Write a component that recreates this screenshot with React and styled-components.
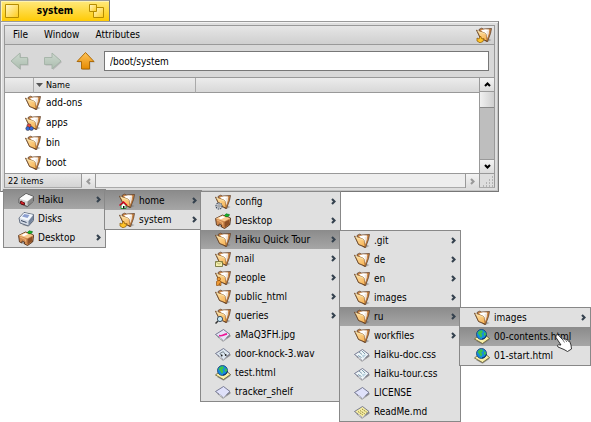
import React from "react";
import styled, { createGlobalStyle, css } from "styled-components";

const Global = createGlobalStyle`
  * { box-sizing: border-box; }
  body { margin: 0; background: #fff; }
  body, button, input { font: 10px/16px "DejaVu Sans Condensed", "DejaVu Sans", sans-serif; color: #000; }
  button, input { margin: 0; padding: 0; border: 0; border-radius: 0; background: none; }
  ul { list-style: none; margin: 0; padding: 0; }
`;

const Svg = styled.svg`
  flex: none;
  display: block;
`;

const Desktop = styled.main`
  min-height: 100vh;
`;

const Window = styled.article`
  position: relative;
  width: calc(100% - 92px);
  min-width: 300px;
`;

const Tab = styled.header`
  display: grid;
  grid-template-columns: 16px 1fr 16px;
  align-items: center;
  width: 110px;
  height: 21px;
  padding: 0 4px;
  border: 1px solid #999;
  border-bottom: 0;
  border-right-color: #777;
  background: linear-gradient(#ffe97c, #ffcb05);
  box-shadow: inset 1px 1px #fff3b0;
`;

const TabButton = styled.button`
  display: block;
  height: 16px;
`;

const TabTitle = styled.h1`
  margin: 0;
  text-align: center;
  font-size: 10px;
  line-height: 16px;
  font-weight: bold;
`;

const Frame = styled.section`
  padding: 4px 3px 3px 4px;
  border: 1px solid #999;
  border-right-color: #777;
  border-bottom-color: #777;
  background: #dedede;
  box-shadow: inset 1px 1px #f2f2f2, inset -1px -1px #c4c4c4;
`;

const Content = styled.div`
  border: 1px solid #999;
  border-bottom-color: #aaa;
  margin: -1px 0 0 -1px;
  background: #d8d8d8;
`;

const MenuBar = styled.nav`
  display: flex;
  align-items: center;
  gap: 16px;
  height: 19px;
  padding: 0 2px 0 8px;
  border-bottom: 1px solid #999;
  background: linear-gradient(#e6e6e6, #cfcfcf);
`;

const BarFill = styled.span`
  flex: 1;
`;

const ToolBar = styled.div`
  display: flex;
  align-items: center;
  height: 33px;
  padding: 0 5px;
  gap: 13px;
  border-bottom: 1px solid #999;
`;

const ToolButton = styled.button`
  display: block;
  height: 20px;
`;

const Address = styled.input`
  flex: 1;
  min-width: 0;
  height: 20px;
  margin-left: -5px;
  && { padding: 0 5px; background: #fff; border: 1px solid #777; }
`;

const Body = styled.div`
  display: grid;
  grid-template-columns: 1fr 15px;
`;

const Table = styled.table`
  width: 100%;
  table-layout: fixed;
  border-collapse: separate;
  border-spacing: 0;
  background: #fff;
`;

const HeadCell = styled.th`
  width: ${(p) => p.$width || "auto"};
  height: 15px;
  padding: 0 0 0 2px;
  text-align: left;
  font-size: 9px;
  line-height: 14px;
  font-weight: normal;
  border-bottom: 1px solid #999;
  border-right: ${(p) => (p.$line ? "1px solid #aaa" : "0")};
  background: linear-gradient(#ececec, #d8d8d8);
`;

const SortLabel = styled.span`
  display: flex;
  align-items: center;
  gap: 3px;
`;

const Cell = styled.td`
  height: 20px;
  padding: 0;
`;

const FileName = styled.span`
  display: flex;
  align-items: center;
  gap: 5px;
  margin-left: -9px;
`;

const VScroll = styled.div`
  display: flex;
  flex-direction: column;
  border-left: 1px solid #999;
  background: #bebebe;
`;

const ScrollButton = styled.button`
  display: flex;
  align-items: center;
  justify-content: center;
  width: 14px;
  height: 14px;
  && {
    background: linear-gradient(#f4f4f4, #dcdcdc);
    ${(p) => css`border-${p.$line}: 1px solid #999;`}
  }
`;

const Thumb = styled.div`
  height: 16px;
  background: linear-gradient(90deg, #f0f0f0, #cfcfcf);
  border-bottom: 1px solid #888;
`;

const Track = styled.div`
  flex: 1;
`;

const Footer = styled.footer`
  display: flex;
  height: 14px;
  border-top: 1px solid #999;
  background: #eee;
`;

const Status = styled.output`
  width: 77px;
  padding-left: 3px;
  font-size: 9px;
  line-height: 14px;
  background: linear-gradient(#e8e8e8, #d4d4d4);
  border-right: 1px solid #999;
`;

const Corner = styled.div`
  display: flex;
  border-left: 1px solid #999;
  background: #dedede;
`;

const Menu = styled.ul`
  position: absolute;
  z-index: 1;
  left: ${(p) => (p.$root ? "3px" : "calc(100% - 1px)")};
  top: ${(p) => (p.$root ? "calc(100% - 3px)" : "0")};
  width: ${(p) => p.$width};
  border: 1px solid #888;
  background: #e0e0e0;
`;

const MenuRow = styled.li`
  position: relative;
`;

const MenuButton = styled.button`
  display: flex;
  align-items: center;
  gap: 4px;
  width: 100%;
  height: 19px;
  && {
    padding: 0 3px 0 14px;
    background: ${(p) => (p.$active ? "linear-gradient(#8b8b8b, #a6a6a6)" : "none")};
  }
`;

const MenuText = styled.span`
  flex: 1;
  text-align: left;
  white-space: nowrap;
`;

const Pointer = styled.span`
  position: absolute;
  z-index: 2;
  right: 17px;
  top: 7px;
`;

const overlays = {
  apps: (
    <g stroke="#333" strokeWidth=".5">
      <circle cx="4" cy="11" r="2.2" fill="#ee4a3c" />
      <circle cx="2.8" cy="13.6" r="2" fill="#3568dd" />
      <circle cx="6.4" cy="13.5" r="2" fill="#3568dd" />
    </g>
  ),
  home: (
    <g>
      <path d="M2 12v3.5h5V12L4.5 10z" fill="#fff" stroke="#2b8d38" />
      <path d="M.5 12.5 4.5 9l3.5 3.5" fill="none" stroke="#d1001f" strokeWidth="1.5" />
      <path d="M4 13h1.5v2.5H4z" fill="#111" />
    </g>
  ),
  system: <path d="M1 11l2 1 1.5-3L6 12l2-.5-1 3-3 1.3L1 14z" fill="#ffc329" stroke="#8d5900" strokeWidth=".7" />,
  config: (
    <g>
      <circle cx="4" cy="12" r="3" fill="#d7dce4" stroke="#444e5c" strokeWidth="1.2" strokeDasharray="1.5 .7" />
      <circle cx="4" cy="12" r="1.2" fill="#fff" stroke="#555" strokeWidth=".7" />
    </g>
  ),
  mail: (
    <g stroke="#68682b" strokeWidth=".8">
      <path d="M.5 10.5h7v5h-7z" fill="#f4efad" />
      <path d="m1 11 3 2.2L7.2 11" fill="none" strokeWidth=".4" />
    </g>
  ),
  people: (
    <g fill="#ee9a35" stroke="#804000" strokeWidth=".6">
      <path d="M1.5 15.5v-4l1.500-1h1.500l1.500 1v4H4.500v-2l-1 2z" />
      <circle cx="3.800" cy="9" r="1.700" />
    </g>
  ),
  queries: (
    <g>
      <path d="m3 13-2.500 2.500" stroke="#333" strokeWidth="1.5" />
      <circle cx="5" cy="11" r="2.6" fill="#c5e8f7" stroke="#3f5363" />
    </g>
  ),
};

const Folder = ({ badge }) => (
  <>
    <path d="m12 11.500 3.500 1.500-4 2-2-1z" fill="#666" opacity=".45" />
    <path d="M3 2.500 5.500 1.200l2 .8 8-.5-1 5-3 8-2-.5z" fill="#c98445" stroke="#54351f" strokeWidth=".7" />
    <path d="M5 3.300 9 2.200l4 .2-.8 5-1.200 4-2-4z" fill="#fff" />
    <path d="m10.500 4.300 2.800-1.200-1 5-1 3z" fill="#efe6dc" />
    <path d="M.5 3 3 4.200l5.500 1.600 1.700 1.400 1 7-6.700-2.700z" fill="url(#flap)" stroke="#8a5a2c" strokeWidth=".6" />
    <path d="M.5 3l4 8.500 6.700 2.700" fill="none" stroke="#54351f" strokeWidth=".7" />
    <path d="m1.300 3.900 1.700.9 5.200 1.600 1.300 1" fill="none" stroke="#fff0bd" strokeWidth=".7" />
    {overlays[badge]}
  </>
);

const Sheet = ({ fill, children }) => (
  <>
    <path d="m2 9.500 6 5.300 7.500-5.300V8z" fill="#666" opacity=".65" />
    <path d="M.5 7.500 8.500 2.500l6.500 5-6.500 6z" fill={fill} stroke="#5c607c" strokeWidth=".8" />
    <path d="m4 10.500 4.500 3 3-2.500" fill="none" stroke="#fff" strokeWidth=".6" />
    {children}
  </>
);

const art = {
  file: <Sheet fill="#dfe1fa" />,
  css: (
    <Sheet fill="#eef5f8">
      <path d="m5 5 3 2.500M8 4l3 3M4 8.500l3.500 2" stroke="#7e9eae" strokeWidth="1" />
      <path d="m8 8 4.500-.5L9 11z" fill="#b8d2df" />
    </Sheet>
  ),
  text: (
    <Sheet fill="#f5eda5">
      <path d="m4 7.500 5 3.500M6 6.500l5 3.500M8 5l5 3.500" stroke="#8c7f35" strokeWidth=".9" strokeDasharray="1.500 .7" />
    </Sheet>
  ),
  image: (
    <Sheet fill="#e7e4f7">
      <path d="M4 8.700q3 .3 4.500-.6t3.500-1.300" fill="none" stroke="#ee1694" strokeWidth="1.7" />
    </Sheet>
  ),
  sound: (
    <Sheet fill="#dde7f0">
      <path d="M4.800 7.500 8.500 5.500M6.500 9.500l-1.500-2M11 9.500 8.500 6" fill="none" stroke="#4a5862" strokeWidth=".7" />
      <circle cx="6.7" cy="9.500" r=".9" fill="#222" />
      <circle cx="10.7" cy="9" r=".9" fill="#222" />
    </Sheet>
  ),
  html: (
    <>
      <path d="m2 12 6.500 3.700L15.500 11V9z" fill="#777" opacity=".7" />
      <path d="m.5 10 3-2.500 9-.5 3 2.500-7 5z" fill="#f8efa9" stroke="#62592b" strokeWidth=".8" />
      <circle cx="7.5" cy="5.5" r="5" fill="#168be3" stroke="#123d68" strokeWidth=".8" />
      <path d="M3.500 4Q5 .8 8 1.300L9 3 7 5l1.500 1L7 9 5.500 6.500zM10 3l2 1.500-.5 3L9.800 6z" fill="#3cc34a" />
      <path d="M8 10q4-.5 4.500-4" stroke="#10346d" fill="none" />
    </>
  ),
  drive: (
    <>
      <path d="m3 12 6 3.500 6.500-6V8z" fill="#666" opacity=".6" />
      <path d="m1 6.500 7-5 7.500 3v4.500L9.500 14.500 1 11z" fill="#d2d2d2" stroke="#444" strokeWidth=".8" />
      <path d="m1.500 6.500 6.700-4.500 6.800 2.700L9.500 9.500z" fill="#fafafa" />
      <path d="m9.500 9.500 5.700-4.600v4L9.500 14z" fill="#888" />
      <path d="M2.500 9.300h1.500l1 1.200 1.500.3v2l-2.500-.3-1.500-1.200z" fill="#dc1d28" stroke="#4d0000" strokeWidth=".8" />
    </>
  ),
  disks: (
    <>
      <path d="m4 14 6 1.500 5.500-5V8z" fill="#666" opacity=".5" />
      <path d="m1 7 5-5.500 9.500 2V9l-5 6-8.500-3z" fill="#d3dae5" stroke="#48566c" strokeWidth=".8" />
      <path d="m1.500 7 4.700-5 8.500 1.800-4.200 6z" fill="#f3f7fc" />
      <path d="M4 5.500 6.500 3l5 1L9.500 7z" fill="#8c9fd0" />
      <path d="m10.500 10 4.500-5.500V9l-4.500 5.500z" fill="#75849c" />
      <path d="m3 9.500 5.500 2" stroke="#35435d" />
    </>
  ),
  desktop: (
    <>
      <path d="m3 13 7 2.500 5.500-4v-3z" fill="#666" opacity=".6" />
      <path d="m.5 5.500 7-3.500 8 3v2l-1 5-5 3.500-3-1.500V12L4 11v2l-2.500-1z" fill="#cf8a50" stroke="#4c2c18" strokeWidth=".8" />
      <path d="m.8 5.500 6.700-3 7.700 2.800-5.700 3z" fill="#f9ca90" />
      <path d="m9.500 9 5-2.500-.5 5-4.500 3z" fill="#8e5027" />
      <path d="m3.500 5 4-2 2.500 1.300-4 2z" fill="#fff" />
      <path d="m9.500 2.500 1.500-1.700 3.500.8-.8 1.700-2.700.5z" fill="#18b82b" stroke="#076714" strokeWidth=".6" />
      <path d="m2 7 5.500 2.500v2" fill="none" stroke="#efb476" />
    </>
  ),
};

const Icon = ({ kind, badge, size = 16 }) => (
  <Svg width={size} height={size} viewBox="0 0 16 16" aria-hidden="true">
    {kind === "folder" ? <Folder badge={badge} /> : art[kind]}
  </Svg>
);

const turns = { right: 0, down: 90, left: 180, up: 270 };

const Chevron = ({ dir = "right", color = "#34414e" }) => (
  <Svg width="7" height="7" viewBox="0 0 7 7" aria-hidden="true">
    <path d="M2 1l2.500 2.500L2 6" fill="none" stroke={color} strokeWidth="2.1" transform={`rotate(${turns[dir]} 3.5 3.5)`} />
  </Svg>
);

const arrowPaths = {
  back: "M1 10 10 2v4.500h7.500v7H10V18z",
  forward: "M18 10 9 2v4.500H1.500v7H9V18z",
  up: "M9.500 1.500 18 10.500h-4.500V18h-8v-7.500H1z",
};

const NavArrow = ({ kind }) => (
  <Svg width="20" height="20" viewBox="0 0 20 20" aria-hidden="true">
    <path d={arrowPaths[kind]} transform="translate(1 1)" fill="#777" opacity=".35" />
    <path d={arrowPaths[kind]} fill={kind === "up" ? "url(#orange)" : "url(#sage)"} stroke={kind === "up" ? "#a86400" : "#a3b2a6"} strokeWidth=".9" />
  </Svg>
);

const Hand = () => (
  <Svg width="18" height="18" viewBox="0 0 18 18" aria-hidden="true">
    <path d="M1 1.500Q2-.2 3.500 1.200L7.500 5.500Q8.200 4.200 9.800 5.300 11 4.500 12 5.800 13.500 5.300 14.500 7L16 11l.5 4-4 2.500L9 15.500 3 13Q1.500 11 3.500 10.800L6 11 1 3.500z" fill="#fff" stroke="#222" strokeWidth=".9" />
    <path d="m8 6 1.500 2.500M10.300 5.500l1.500 2.500M12.500 6l1.300 2" stroke="#444" strokeWidth=".7" />
  </Svg>
);

const folder = (name, badge, rest) => ({ name, badge, kind: "folder", sub: true, ...rest });
const file = (name, kind, rest) => ({ name, kind, ...rest });

const tourRu = {
  width: "132px",
  items: [folder("images"), file("00-contents.html", "html", { active: true, pointer: true }), file("01-start.html", "html")],
};

const tour = {
  width: "122px",
  items: [
    folder(".git"), folder("de"), folder("en"), folder("images"),
    folder("ru", null, { active: true, menu: tourRu }),
    folder("workfiles"),
    file("Haiku-doc.css", "css"), file("Haiku-tour.css", "css"), file("LICENSE", "file"), file("ReadMe.md", "text"),
  ],
};

const home = {
  width: "141px",
  items: [
    folder("config", "config"),
    file("Desktop", "desktop", { sub: true }),
    folder("Haiku Quick Tour", null, { active: true, menu: tour }),
    folder("mail", "mail"), folder("people", "people"), folder("public_html"), folder("queries", "queries"),
    file("aMaQ3FH.jpg", "image"), file("door-knock-3.wav", "sound"), file("test.html", "html"), file("tracker_shelf", "file"),
  ],
};

const haiku = {
  width: "98px",
  items: [folder("home", "home", { active: true, menu: home }), folder("system", "system")],
};

const rootMenu = {
  width: "103px",
  items: [
    file("Haiku", "drive", { sub: true, active: true, menu: haiku }),
    file("Disks", "disks"),
    file("Desktop", "desktop", { sub: true }),
  ],
};

const PopupMenu = ({ menu, root }) => (
  <Menu role="menu" $root={root} $width={menu.width}>
    {menu.items.map((item) => (
      <MenuRow key={item.name} role="none">
        <MenuButton role="menuitem" $active={item.active} aria-haspopup={item.sub ? "menu" : undefined}>
          <Icon kind={item.kind} badge={item.badge} />
          <MenuText>{item.name}</MenuText>
          {item.sub && <Chevron />}
        </MenuButton>
        {item.menu && <PopupMenu menu={item.menu} />}
        {item.pointer && <Pointer><Hand /></Pointer>}
      </MenuRow>
    ))}
  </Menu>
);

const files = [["add-ons"], ["apps", "apps"], ["bin"], ["boot"]];

export default function App() {
  return (
    <Desktop>
      <Global />
      <Window>
        <Tab>
          <TabButton aria-label="Close">
            <Svg width="14" height="16" viewBox="0 0 14 16">
              <defs>
                <linearGradient id="gold" x2="1" y2="1"><stop stopColor="#fff8cf" /><stop offset="1" stopColor="#ffcb15" /></linearGradient>
                <linearGradient id="flap" x2="1" y2="1"><stop stopColor="#ffe6ae" /><stop offset="1" stopColor="#f6ae4c" /></linearGradient>
                <linearGradient id="orange" x2="0" y2="1"><stop stopColor="#ffc45a" /><stop offset="1" stopColor="#e58a00" /></linearGradient>
                <linearGradient id="sage" x2="0" y2="1"><stop stopColor="#ccd8ce" /><stop offset="1" stopColor="#acbdaf" /></linearGradient>
              </defs>
              <path d="M.5 1.500h13v13H.5z" fill="url(#gold)" stroke="#b68c00" />
            </Svg>
          </TabButton>
          <TabTitle>system</TabTitle>
          <TabButton aria-label="Zoom">
            <Svg width="15" height="16" viewBox="0 0 15 16">
              <path d="M4.500 4.500h10v10h-10z" fill="url(#gold)" stroke="#b68c00" />
              <path d="M.5 1.500h7v7h-7z" fill="url(#gold)" stroke="#b68c00" />
            </Svg>
          </TabButton>
        </Tab>
        <Frame>
          <Content>
            <MenuBar>
              <button>File</button>
              <button>Window</button>
              <button>Attributes</button>
              <BarFill />
              <Icon kind="folder" badge="system" />
            </MenuBar>
            <ToolBar>
              <ToolButton aria-label="Back"><NavArrow kind="back" /></ToolButton>
              <ToolButton aria-label="Forward"><NavArrow kind="forward" /></ToolButton>
              <ToolButton aria-label="Up"><NavArrow kind="up" /></ToolButton>
              <Address aria-label="Location" defaultValue="/boot/system" />
            </ToolBar>
            <Body>
              <Table>
                <thead>
                  <tr>
                    <HeadCell $width="29px" $line aria-label="Icon" />
                    <HeadCell $width="162px" $line>
                      <SortLabel>
                        <Svg width="7" height="4" viewBox="0 0 7 4"><path d="M0 0h7L3.500 4z" fill="#555" /></Svg>
                        Name
                      </SortLabel>
                    </HeadCell>
                    <HeadCell aria-hidden="true" />
                  </tr>
                </thead>
                <tbody>
                  {files.map(([name, badge]) => (
                    <tr key={name}>
                      <Cell />
                      <Cell><FileName><Icon kind="folder" badge={badge} />{name}</FileName></Cell>
                      <Cell />
                    </tr>
                  ))}
                </tbody>
              </Table>
              <VScroll>
                <ScrollButton $line="bottom" aria-label="Scroll up"><Chevron dir="up" color="#000" /></ScrollButton>
                <Thumb />
                <Track />
                <ScrollButton $line="top" aria-label="Scroll down"><Chevron dir="down" color="#000" /></ScrollButton>
              </VScroll>
            </Body>
            <Footer>
              <Status>22 items</Status>
              <ScrollButton $line="right" aria-label="Scroll left"><Chevron dir="left" color="#999" /></ScrollButton>
              <Track />
              <ScrollButton $line="left" aria-label="Scroll right"><Chevron color="#999" /></ScrollButton>
              <Corner>
                <Svg width="14" height="14" viewBox="0 0 14 14">
                  <path d="M12 3h1M9 6h4M6 9h7M3 12h10" stroke="#888" strokeDasharray="1 2" />
                </Svg>
              </Corner>
            </Footer>
          </Content>
        </Frame>
        <PopupMenu menu={rootMenu} root />
      </Window>
    </Desktop>
  );
}
